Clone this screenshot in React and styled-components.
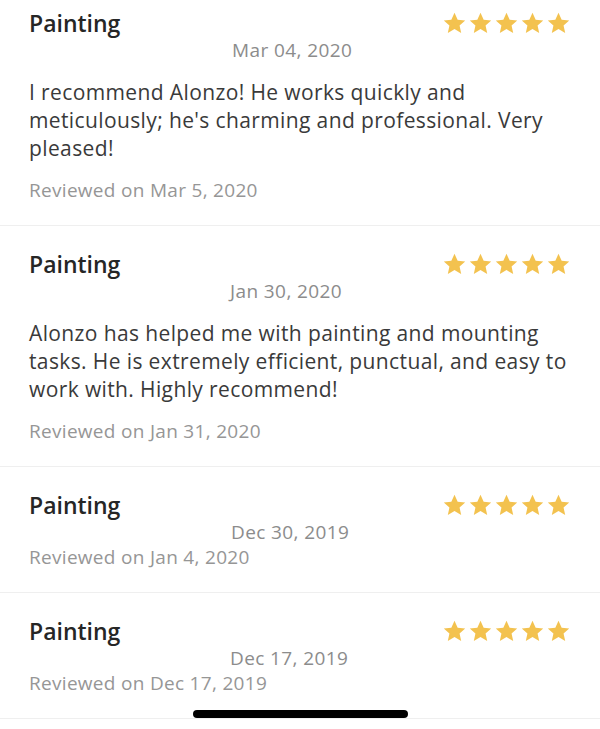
import React from "react";
import styled, { createGlobalStyle } from "styled-components";

const Global = createGlobalStyle`
  html, body {
    margin: 0;
    padding: 0;
    background: #ffffff;
    height: 729px;
    overflow: hidden;
  }
  body {
    font-family: "Open Sans", "Noto Sans", sans-serif;
    -webkit-font-smoothing: antialiased;
  }
`;

const Screen = styled.div`
  width: 600px;
  height: 729px;
  position: relative;
  overflow: hidden;
  background: #fff;
`;

const List = styled.div`
  display: flex;
  flex-direction: column;
`;

const Card = styled.section`
  padding: ${(p) => (p.$first ? "9px" : "24px")} 31px 23px 29px;
  border-bottom: 1px solid #efefef;
  display: flex;
  flex-direction: column;
`;

const TitleRow = styled.div`
  display: flex;
  justify-content: space-between;
  align-items: center;
  height: 28px;
`;

const Title = styled.h3`
  margin: 0;
  font-size: 23px;
  line-height: 28px;
  font-weight: 600;
  color: #262626;
`;

const Stars = styled.div`
  display: flex;
  gap: 3px;
  margin-right: -1px;
`;

const DateLine = styled.div`
  margin-left: ${(p) => 201 + (p.$shift || 0)}px;
  font-size: 19px;
  letter-spacing: 0.4px;
  line-height: 26px;
  color: #8c8c8c;
`;

const Body = styled.p`
  margin: 15px 0 16px;
  font-size: 21px;
  letter-spacing: 0.38px;
  line-height: 28px;
  color: #3a3a3a;
`;

const Reviewed = styled.div`
  font-size: 19px;
  letter-spacing: 0.3px;
  line-height: 24px;
  color: #969696;
`;

const HomeBar = styled.div`
  position: absolute;
  left: 193px;
  bottom: 11px;
  width: 215px;
  height: 8px;
  border-radius: 4px;
  background: #000;
`;

const Star = () => (
  <svg width="23" height="22" viewBox="0 0 24 23" aria-hidden="true">
    <path
      d="M12 0.8l3.3 7.3 7.9 0.8-5.9 5.3 1.7 7.8L12 17.9 5 22l1.7-7.8L0.8 8.9l7.9-0.8z"
      fill="#F3C24F"
    />
  </svg>
);

const reviews = [
  {
    title: "Painting",
    date: "Mar 04, 2020",
    shift: 2,
    body: "I recommend Alonzo! He works quickly and meticulously; he's charming and professional. Very pleased!",
    reviewed: "Reviewed on Mar 5, 2020",
  },
  {
    title: "Painting",
    date: "Jan 30, 2020",
    shift: 0,
    body: "Alonzo has helped me with painting and mounting tasks. He is extremely efficient, punctual, and easy to work with. Highly recommend!",
    reviewed: "Reviewed on Jan 31, 2020",
  },
  {
    title: "Painting",
    date: "Dec 30, 2019",
    shift: 1,
    reviewed: "Reviewed on Jan 4, 2020",
  },
  {
    title: "Painting",
    date: "Dec 17, 2019",
    shift: 0,
    reviewed: "Reviewed on Dec 17, 2019",
  },
];

export default function App() {
  return (
    <Screen>
      <Global />
      <List>
        {reviews.map((r, i) => (
          <Card key={i} $first={i === 0}>
            <TitleRow>
              <Title>{r.title}</Title>
              <Stars>
                {[0, 1, 2, 3, 4].map((s) => (
                  <Star key={s} />
                ))}
              </Stars>
            </TitleRow>
            <DateLine $shift={r.shift}>{r.date}</DateLine>
            {r.body && <Body>{r.body}</Body>}
            <Reviewed>{r.reviewed}</Reviewed>
          </Card>
        ))}
      </List>
      <HomeBar />
    </Screen>
  );
}
